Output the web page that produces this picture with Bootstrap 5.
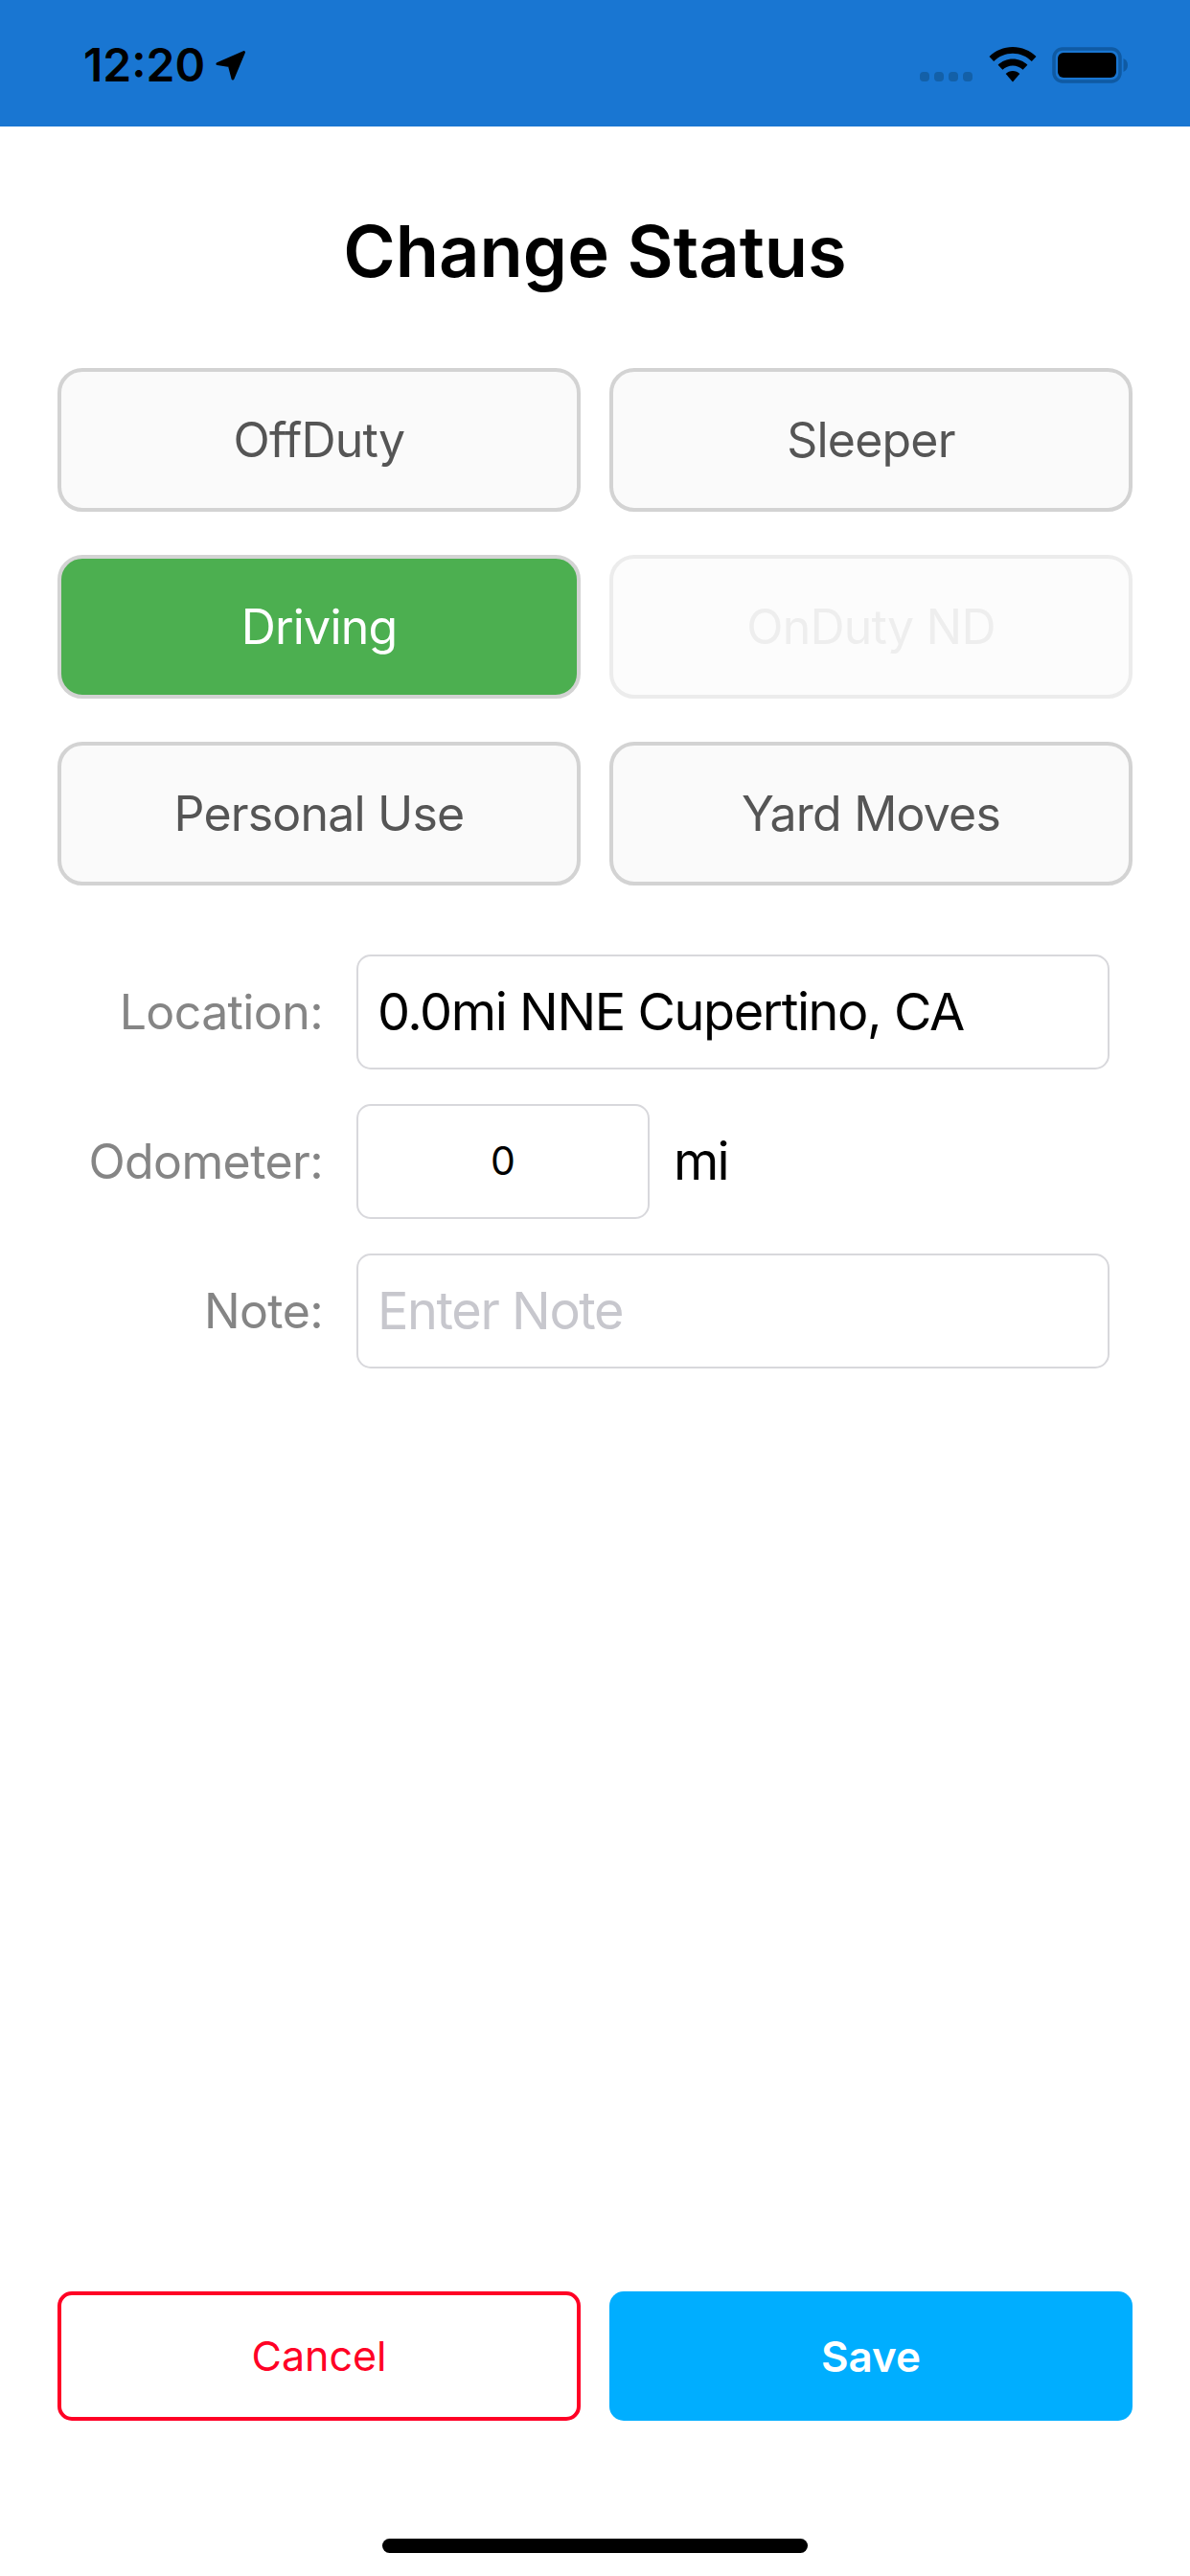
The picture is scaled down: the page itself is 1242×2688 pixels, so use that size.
<!DOCTYPE html>
<html lang="en">
<head>
<meta charset="utf-8">
<title>Change Status</title>
<link rel="stylesheet" href="https://cdn.jsdelivr.net/npm/bootstrap@5.3.0/dist/css/bootstrap.min.css">
<style>
html,body{margin:0;background:#fff;}
body{font-family:Inter,"Noto Sans",sans-serif;}
.phone{width:1242px;height:2688px;}
.statusbar{height:132px;background:#1976d2;padding:49px 64px 0 87px;color:#000;}
.clock{font-size:48px;font-weight:600;line-height:37px;}
.arrow-icon{margin:3px 0 0 10px;}
.dots-icon{margin:26px 17px 0 0;}
.wifi-icon{margin-right:16px;}
.sheet-title{font-size:74px;font-weight:600;line-height:80px;margin:90px 0 82px;color:#000;}
.status-grid{display:grid;grid-template-columns:546px 546px;gap:45px 30px;padding:0 60px;}
.btn.status-btn{height:150px;border:4px solid #d3d3d3;border-radius:26px;background:#fafafa;color:#555;font-size:50px;font-weight:400;letter-spacing:-.8px;padding:0;}
.btn.status-btn.is-active{background:#4caf50;color:#fff;}
.btn.status-btn:disabled{opacity:1;background:#fcfcfc;border-color:#ececec;color:#eee;}
.status-form{padding:72px 0 0;display:flex;flex-direction:column;gap:36px;}
.field-label{width:337px;text-align:right;font-size:50px;letter-spacing:-.6px;color:#858585;margin:0 35px 0 0;flex:none;}
.form-control.field-input{width:786px;height:120px;border:2px solid #d8d8dc;border-radius:15px;font-size:54px;letter-spacing:-1.4px;color:#000;padding:0 20px 2px;box-shadow:none;}
.form-control.field-input::placeholder{color:#c7c7cd;opacity:1;}
.form-control.field-odo{width:306px;font-size:41px;letter-spacing:0;text-align:center;}
.unit-text{font-size:54px;letter-spacing:-1.8px;color:#000;margin-left:25px;padding-bottom:2px;}
.action-row{display:grid;grid-template-columns:546px 546px;gap:30px;padding:0 60px;margin-top:auto;}
.btn.action-btn{height:135px;border-radius:15px;padding:0;}
.btn.action-cancel{background:#fff;border:4px solid #ff0025;color:#ff0025;font-size:43px;font-weight:400;}
.btn.action-save{background:#00aeff;border:0;color:#fff;font-size:44px;font-weight:600;}
.home-strip{height:162px;padding-top:123px;}
.home-bar{width:444px;height:15px;border-radius:8px;background:#000;}
</style>
</head>
<body>
<div class="phone d-flex flex-column">
  <div class="statusbar d-flex justify-content-between align-items-start flex-shrink-0">
    <div class="d-flex align-items-start">
      <span class="clock">12:20</span>
      <svg class="arrow-icon" width="33" height="33" viewBox="0 0 33 33" aria-hidden="true"><path d="M3 14.500 30.500 2.500 19 30 15.500 16.500z" fill="#000" stroke="#000" stroke-width="3" stroke-linejoin="round"/></svg>
    </div>
    <div class="d-flex align-items-start">
      <svg width="55" height="11" viewBox="0 0 55 11" class="dots-icon" aria-hidden="true"><g fill="#1360a8"><rect width="10" height="10" rx="4"/><rect x="15" width="10" height="10" rx="4"/><rect x="30" width="10" height="10" rx="4"/><rect x="45" width="10" height="10" rx="4"/></g></svg>
      <svg width="50" height="37" viewBox="0 0 50 37" class="wifi-icon" aria-hidden="true"><g fill="#000"><path d="M25 0C15.500 0 7 3.800.5 10l4.700 5C10.500 9.900 17.400 6.800 25 6.800S39.500 9.900 44.800 15l4.700-5C43 3.800 34.500 0 25 0z"/><path d="M25 12.500c-6 0-11.400 2.400-15.400 6.200l4.800 5c2.800-2.600 6.500-4.300 10.600-4.300s7.800 1.700 10.600 4.300l4.800-5C36.400 14.900 31 12.500 25 12.500z"/><path d="M25 25c-2.800 0-5.400 1.100-7.300 3L25 36.500 32.300 28c-1.900-1.900-4.500-3-7.300-3z"/></g></svg>
      <svg width="80" height="38" viewBox="0 0 80 38" aria-hidden="true"><rect x="2" y="2" width="69" height="34" rx="9" fill="none" stroke="#0f5aa3" stroke-width="3.500"/><rect x="6" y="6" width="61" height="26" rx="6" fill="#000"/><path d="M74.500 12c3 1.200 4.500 4 4.500 7s-1.500 5.800-4.500 7z" fill="#0f5aa3"/></svg>
    </div>
  </div>

  <h1 class="sheet-title text-center">Change Status</h1>

  <div class="status-grid">
    <button type="button" class="btn status-btn">OffDuty</button>
    <button type="button" class="btn status-btn">Sleeper</button>
    <button type="button" class="btn status-btn is-active">Driving</button>
    <button type="button" class="btn status-btn" disabled>OnDuty ND</button>
    <button type="button" class="btn status-btn">Personal Use</button>
    <button type="button" class="btn status-btn">Yard Moves</button>
  </div>

  <form class="status-form">
    <div class="d-flex align-items-center">
      <label class="field-label" for="loc">Location:</label>
      <input id="loc" class="form-control field-input" type="text" value="0.0mi NNE Cupertino, CA">
    </div>
    <div class="d-flex align-items-center">
      <label class="field-label" for="odo">Odometer:</label>
      <input id="odo" class="form-control field-input field-odo" type="text" value="0">
      <span class="unit-text">mi</span>
    </div>
    <div class="d-flex align-items-center">
      <label class="field-label" for="note">Note:</label>
      <input id="note" class="form-control field-input" type="text" placeholder="Enter Note">
    </div>
  </form>

  <div class="action-row">
    <button type="button" class="btn action-btn action-cancel">Cancel</button>
    <button type="button" class="btn action-btn action-save">Save</button>
  </div>
  <div class="home-strip d-flex justify-content-center flex-shrink-0">
    <div class="home-bar"></div>
  </div>
</div>
<script src="https://cdn.jsdelivr.net/npm/bootstrap@5.3.0/dist/js/bootstrap.bundle.min.js"></script>
</body>
</html>
